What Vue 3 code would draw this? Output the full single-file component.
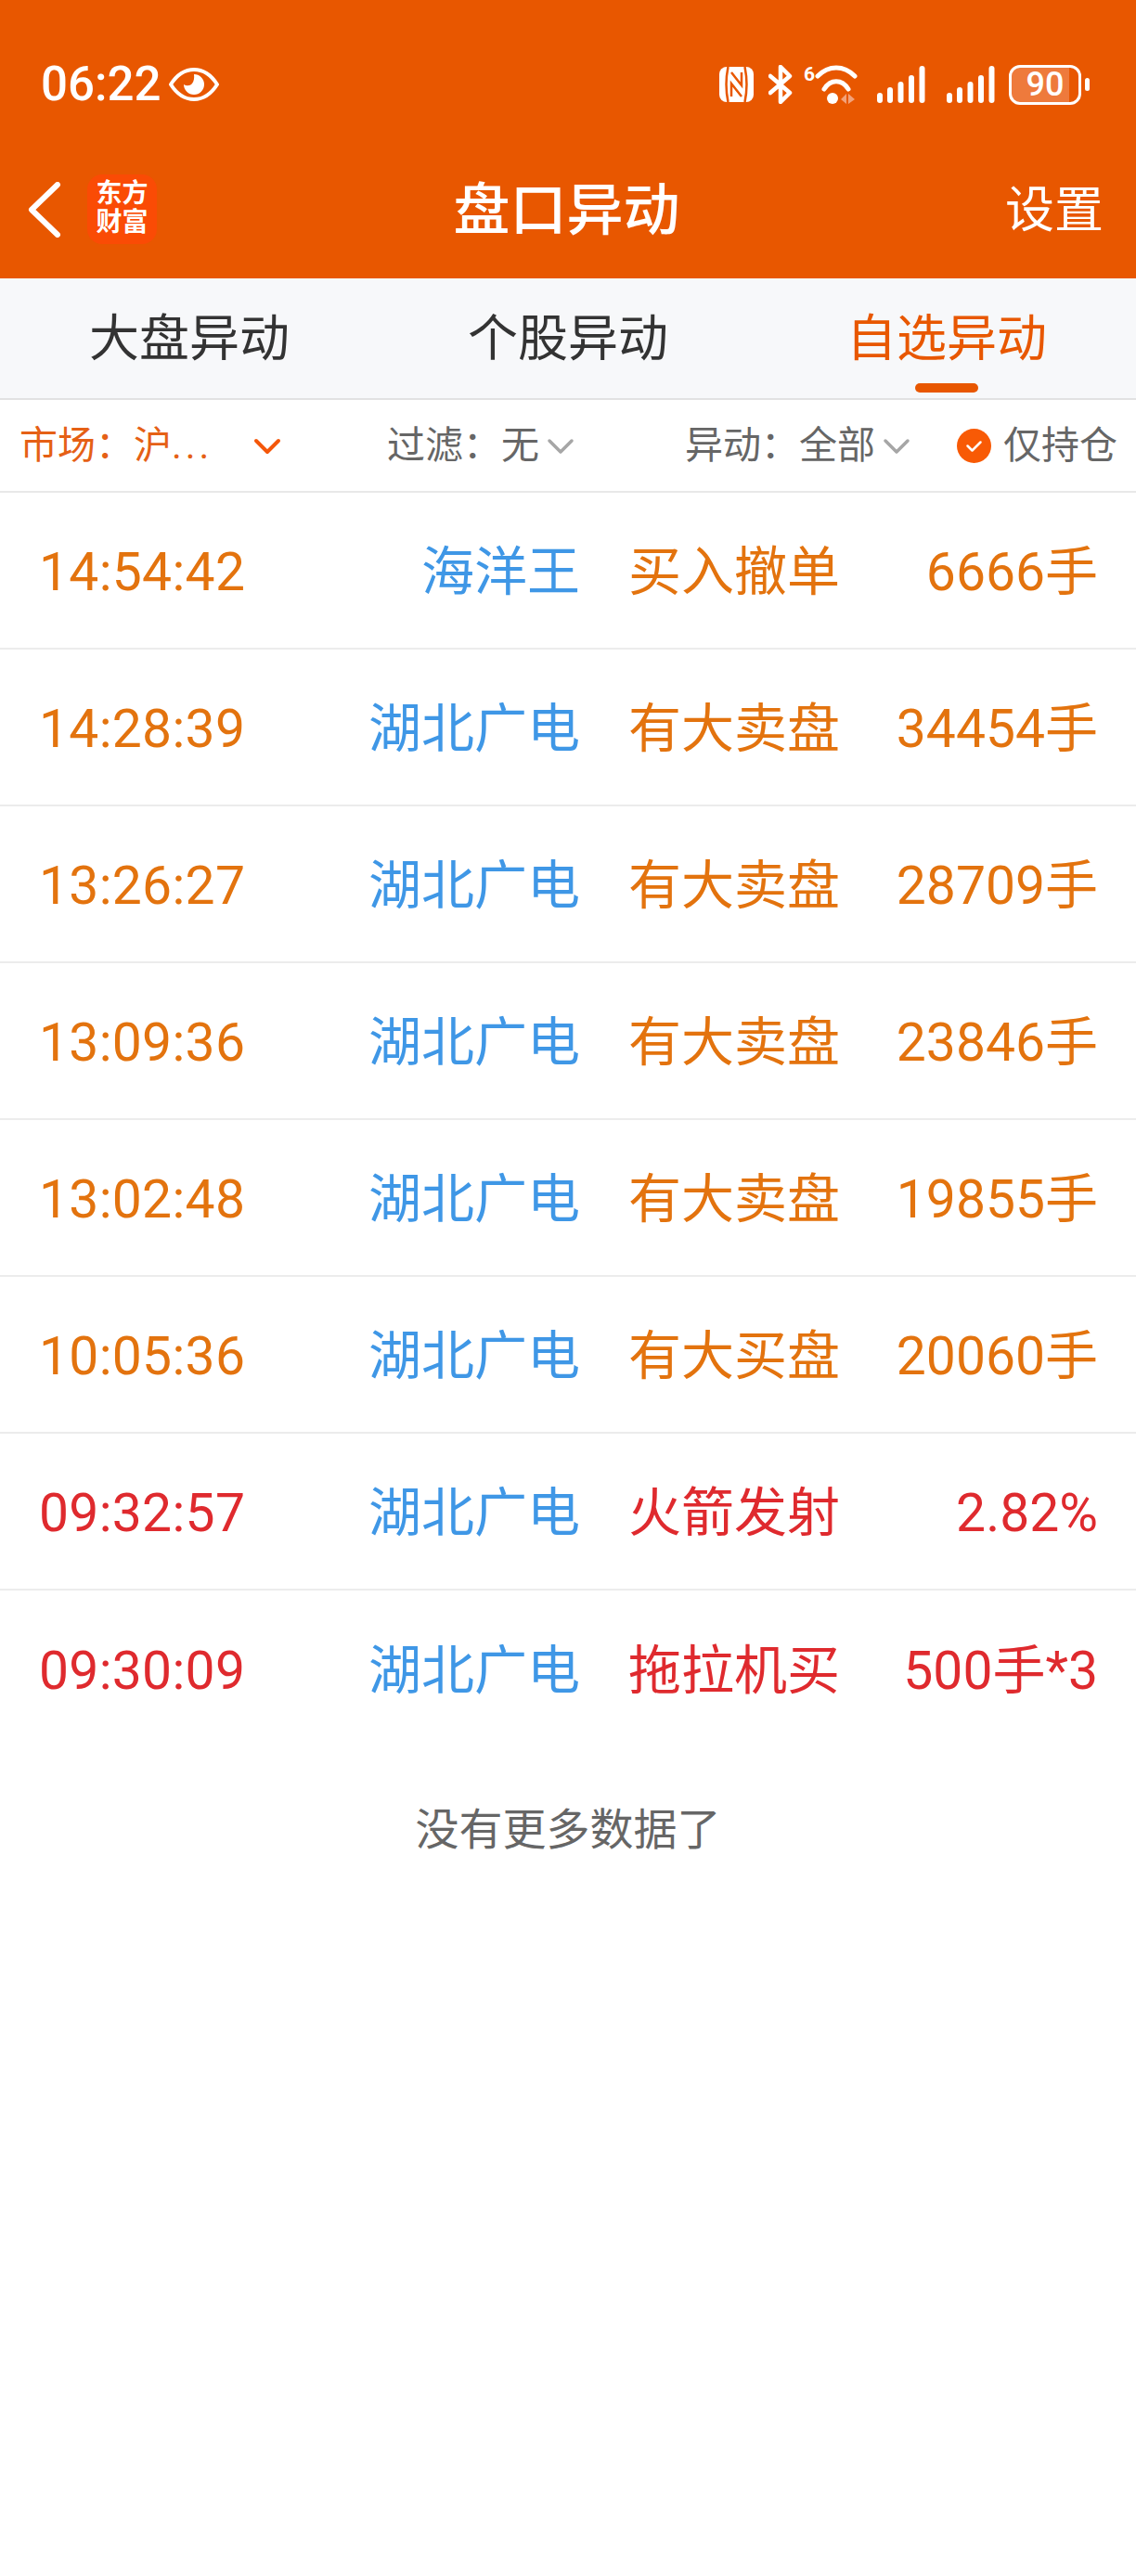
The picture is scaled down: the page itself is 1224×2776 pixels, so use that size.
<script setup>
const tabs = [
  { name: '大盘异动' },
  { name: '个股异动' },
  { name: '自选异动', active: true }
];

const rows = [
  { time: '14:54:42', name: '海洋王', type: '买入撤单', value: '6666手', tone: 'orange' },
  { time: '14:28:39', name: '湖北广电', type: '有大卖盘', value: '34454手', tone: 'orange' },
  { time: '13:26:27', name: '湖北广电', type: '有大卖盘', value: '28709手', tone: 'orange' },
  { time: '13:09:36', name: '湖北广电', type: '有大卖盘', value: '23846手', tone: 'orange' },
  { time: '13:02:48', name: '湖北广电', type: '有大卖盘', value: '19855手', tone: 'orange' },
  { time: '10:05:36', name: '湖北广电', type: '有大买盘', value: '20060手', tone: 'orange' },
  { time: '09:32:57', name: '湖北广电', type: '火箭发射', value: '2.82%', tone: 'red' },
  { time: '09:30:09', name: '湖北广电', type: '拖拉机买', value: '500手*3', tone: 'red' }
];
</script>

<template>
  <div class="page">
    <header class="header">
      <div class="status">
        <div class="status-left">
          <span class="clock">06:22</span>
          <svg class="eye" viewBox="0 0 54 36">
            <path d="M2 18C9 7 17 2 27 2s18 5 25 16c-7 11-15 16-25 16S9 29 2 18Z" fill="none" stroke="#fff" stroke-width="4" stroke-linejoin="round" />
            <path d="M27 7a11 11 0 1 1-11 11c3 2 7 1.500 9-1 2-2.500 2.500-6 2-10Z" fill="#fff" />
          </svg>
        </div>
        <div class="status-right">
          <svg class="nfc" viewBox="0 0 37 38">
            <rect x="0" y="0" width="37" height="38" rx="8" fill="#fff" />
            <path d="M9.500 0c-2.500 12-2.500 26 0 38M27.500 0c2.500 12 2.500 26 0 38" stroke="#e85700" stroke-width="2.500" fill="none" />
            <path d="M13 6l11 14V6M13 32V18l11 14" stroke="#e85700" stroke-width="2.500" fill="none" />
          </svg>
          <svg class="bt" viewBox="0 0 26 42">
            <path d="M2 12l21 18-10 10V2l10 10L2 30" fill="none" stroke="#fff" stroke-width="4.500" stroke-linejoin="round" stroke-linecap="round" />
          </svg>
          <div class="wifi-box">
            <span class="wifi-six">6</span>
            <svg class="wifi" viewBox="0 0 46 42">
              <path d="M3 12C15 0 31 0 43 12" fill="none" stroke="#fff" stroke-width="5" stroke-linecap="round" />
              <path d="M10 26C17 15 29 15 36 26" fill="none" stroke="#fff" stroke-width="5" stroke-linecap="round" />
              <circle cx="19" cy="36" r="6" fill="#fff" />
              <path d="M28 37l6-6v11ZM36 31l7 6-7 5Z" fill="#f2a27a" />
            </svg>
          </div>
          <svg class="signal" viewBox="0 0 52 40">
            <rect x="0" y="29" width="6" height="11" rx="3" fill="#fff" />
            <rect x="11" y="23" width="6" height="17" rx="3" fill="#fff" />
            <rect x="22.500" y="17" width="6" height="23" rx="3" fill="#fff" />
            <rect x="34" y="10" width="6" height="30" rx="3" fill="#fff" />
            <rect x="45.500" y="0" width="6" height="40" rx="3" fill="#fff" />
          </svg>
          <svg class="signal signal-second" viewBox="0 0 52 40">
            <rect x="0" y="29" width="6" height="11" rx="3" fill="#fff" />
            <rect x="11" y="23" width="6" height="17" rx="3" fill="#fff" />
            <rect x="22.500" y="17" width="6" height="23" rx="3" fill="#fff" />
            <rect x="34" y="10" width="6" height="30" rx="3" fill="#fff" />
            <rect x="45.500" y="0" width="6" height="40" rx="3" fill="#fff" />
          </svg>
          <div class="battery">
            <div class="battery-body"><span class="battery-level">90</span></div>
            <div class="battery-nub"></div>
          </div>
        </div>
      </div>
      <nav class="nav">
        <div class="nav-left">
          <svg class="back" viewBox="0 0 36 60">
            <path d="M32 3L4 30l28 27" fill="none" stroke="#fff" stroke-width="6" stroke-linecap="round" stroke-linejoin="round" />
          </svg>
          <div class="logo"><span>东方</span><span>财富</span></div>
        </div>
        <div class="title">盘口异动</div>
        <div class="settings">设置</div>
      </nav>
    </header>

    <div class="tabs">
      <div v-for="tab in tabs" :key="tab.name" class="tab" :class="{ active: tab.active }">
        {{ tab.name }}
        <i v-if="tab.active" class="tab-bar"></i>
      </div>
    </div>

    <div class="filters">
      <div class="filter filter-market">
        <span>市场：</span><span class="filter-value">沪<span class="dots">...</span></span>
        <svg class="chev chev-market" viewBox="0 0 30 18">
          <path d="M3 3l12 12L27 3" fill="none" stroke="#f4570a" stroke-width="4" stroke-linecap="round" stroke-linejoin="round" />
        </svg>
      </div>
      <div class="filter filter-noise">
        <span>过滤：</span><span class="filter-value">无</span>
        <svg class="chev" viewBox="0 0 30 18">
          <path d="M3 3l12 12L27 3" fill="none" stroke="#a6a6a6" stroke-width="3.500" stroke-linecap="round" stroke-linejoin="round" />
        </svg>
      </div>
      <div class="filter filter-kind">
        <span>异动：</span><span class="filter-value">全部</span>
        <svg class="chev" viewBox="0 0 30 18">
          <path d="M3 3l12 12L27 3" fill="none" stroke="#a6a6a6" stroke-width="3.500" stroke-linecap="round" stroke-linejoin="round" />
        </svg>
      </div>
      <div class="filter filter-hold">
        <svg class="check" viewBox="0 0 37 37">
          <circle cx="18.500" cy="18.500" r="18.500" fill="#f85a05" />
          <path d="M11.500 18.500l5 5 9-9" fill="none" stroke="#fff" stroke-width="2.500" stroke-linecap="round" stroke-linejoin="round" />
        </svg>
        <span>仅持仓</span>
      </div>
    </div>

    <div class="list">
      <div v-for="row in rows" :key="row.time" class="row" :class="row.tone">
        <span class="time">{{ row.time }}</span>
        <span class="name">{{ row.name }}</span>
        <span class="type">{{ row.type }}</span>
        <span class="value">{{ row.value }}</span>
      </div>
    </div>

    <div class="no-more">没有更多数据了</div>
  </div>
</template>

<style>
html, body {
  margin: 0;
  background: #fff;
}
</style>

<style scoped>
.page {
  width: 1224px;
  min-height: 2776px;
  background: #fff;
  font-family: Roboto, "Noto Sans CJK SC", sans-serif;
}

.header {
  height: 300px;
  background: #e85700;
  color: #fff;
  box-sizing: border-box;
  padding-top: 69px;
}

.status {
  height: 44px;
  display: flex;
  justify-content: space-between;
  align-items: center;
  padding: 0 50px 0 44px;
}
.status-left {
  display: flex;
  align-items: center;
}
.clock {
  font-size: 51px;
  line-height: 44px;
  font-weight: 500;
}
.eye {
  width: 54px;
  height: 36px;
  margin-left: 9px;
}
.status-right {
  display: flex;
  align-items: center;
}
.nfc {
  width: 37px;
  height: 38px;
}
.bt {
  width: 26px;
  height: 42px;
  margin-left: 16px;
}
.wifi-box {
  display: flex;
  margin-left: 12px;
  align-items: flex-start;
}
.wifi-six {
  font-size: 21px;
  line-height: 20px;
  font-weight: 700;
  width: 12px;
}
.wifi {
  width: 46px;
  height: 42px;
}
.signal {
  width: 52px;
  height: 40px;
  margin-left: 21px;
}
.signal-second {
  margin-left: 23px;
}
.battery {
  display: flex;
  align-items: center;
  margin-left: 15px;
}
.battery-body {
  width: 78px;
  height: 43px;
  box-sizing: border-box;
  border: 3px solid #fff;
  border-radius: 12px;
  background: linear-gradient(to right, #ee7a3c 86%, transparent 86%);
  display: flex;
  align-items: center;
  justify-content: center;
}
.battery-level {
  font-size: 36px;
  line-height: 36px;
  font-weight: 500;
}
.battery-nub {
  width: 5px;
  height: 14px;
  margin-left: 4px;
  border-radius: 3px;
  background: #fff;
}

.nav {
  height: 76px;
  margin-top: 73px;
  display: grid;
  grid-template-columns: 1fr auto 1fr;
  align-items: center;
  padding: 0 35px 0 30px;
}
.nav-left {
  display: flex;
  align-items: center;
}
.back {
  width: 36px;
  height: 60px;
}
.logo {
  width: 75px;
  height: 75px;
  margin-left: 28px;
  border-radius: 16px;
  background: #fa4b05;
  box-sizing: border-box;
  padding-bottom: 3px;
  display: flex;
  flex-direction: column;
  align-items: center;
  justify-content: center;
  font-size: 28px;
  line-height: 31px;
  font-weight: 700;
}
.title {
  font-size: 61px;
  line-height: 76px;
  padding-top: 3px;
  padding-left: 2px;
  font-weight: 500;
}
.settings {
  justify-self: end;
  font-size: 53px;
  line-height: 76px;
  padding-top: 3px;
}

.tabs {
  height: 131px;
  box-sizing: border-box;
  background: #f7f8fa;
  border-bottom: 2px solid #e2e2e2;
  display: grid;
  grid-template-columns: repeat(3, 1fr);
}
.tab {
  position: relative;
  text-align: center;
  font-size: 54px;
  line-height: 131px;
  color: #333;
}
.tab.active {
  color: #e85700;
}
.tab-bar {
  position: absolute;
  left: 50%;
  bottom: 8px;
  width: 68px;
  height: 10px;
  margin-left: -34px;
  border-radius: 5px;
  background: #e85700;
}

.filters {
  height: 100px;
  box-sizing: border-box;
  border-bottom: 2px solid #e8e8e8;
  padding-left: 21px;
  display: flex;
  align-items: center;
  font-size: 41px;
  color: #666;
}
.filter {
  display: flex;
  align-items: center;
  line-height: 56px;
}
.filter-market {
  width: 396px;
  color: #e56015;
}
.filter-noise {
  width: 321px;
}
.filter-kind {
  width: 293px;
}
.dots {
  letter-spacing: 4px;
}
.chev {
  width: 30px;
  height: 18px;
  margin-left: 8px;
  margin-top: 2px;
}
.chev-market {
  margin-left: 44px;
}
.check {
  width: 37px;
  height: 37px;
  margin-right: 13px;
}

.row {
  height: 169px;
  box-sizing: border-box;
  border-bottom: 2px solid #ececec;
  padding: 0 41px 0 42px;
  display: grid;
  grid-template-columns: 260px 323px 278px 1fr;
  align-items: center;
  font-size: 57px;
  line-height: 76px;
}
.row:last-child {
  border-bottom: 0;
}
.row.orange {
  color: #e3730e;
}
.row.red {
  color: #df2a2e;
}
.time {
  padding-top: 5px;
  letter-spacing: 0.3px;
}
.name {
  text-align: right;
  color: #3f97e6;
  padding-top: 4px;
}
.type {
  padding-left: 52px;
  white-space: nowrap;
  padding-top: 4px;
}
.value {
  text-align: right;
  white-space: nowrap;
  padding-top: 4px;
}

.no-more {
  margin-top: 55px;
  text-align: center;
  font-size: 47px;
  line-height: 68px;
  color: #666;
}
</style>
